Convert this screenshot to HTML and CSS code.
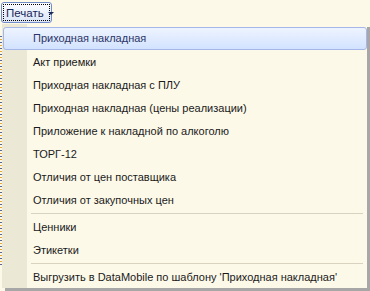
FILE: index.html
```html
<!DOCTYPE html>
<html lang="ru">
<head>
    <meta charset="UTF-8">
    <title>Печать</title>
    <link rel="stylesheet" href="styles.css">
</head>
<body>

    <div class="toolbar">
        <div class="print-btn"><div class="focus">Печать<span class="arrow"></span></div></div>
    </div>

    <div class="page-edge"></div>

    <!-- Popup menu of the print button -->
    <div class="menu">
        <div class="item active">Приходная накладная</div>
        <div class="item">Акт приемки</div>
        <div class="item">Приходная накладная с ПЛУ</div>
        <div class="item">Приходная накладная (цены реализации)</div>
        <div class="item">Приложение к накладной по алкоголю</div>
        <div class="item">ТОРГ-12</div>
        <div class="item">Отличия от цен поставщика</div>
        <div class="item">Отличия от закупочных цен</div>
        <div class="sep"></div>
        <div class="item">Ценники</div>
        <div class="item">Этикетки</div>
        <div class="sep"></div>
        <div class="item">Выгрузить в DataMobile по шаблону 'Приходная накладная'</div>
    </div>

</body>
</html>
```

FILE: styles.css
```css
body {
    margin: 0;
    background-color: #fdf9e9;
    font-family: "Liberation Sans", Arial, sans-serif;
    font-size: 11px;
    color: #1a1a1a;
    width: 370px;
    height: 291px;
    overflow: hidden;
    position: relative;
}

.toolbar {
    display: flex;
    padding: 2px 0 0 1px;
}

.print-btn {
    display: block;
    width: 51px;
    height: 21px;
    padding: 1px;
    box-sizing: border-box;
    border: 1px solid #6f8cc8;
    border-radius: 3px;
    background: linear-gradient(#fbfcff, #dbe5f7);
    color: #17255a;
    font-size: 11.5px;
}

.print-btn .focus {
    display: flex;
    align-items: center;
    height: 17px;
    box-sizing: border-box;
    padding-left: 2px;
    border: 1px dotted #000;
}

.arrow {
    display: inline-block;
    margin-left: 4px;
    margin-top: 1px;
    border-left: 3px solid transparent;
    border-right: 3px solid transparent;
    border-top: 3px solid #1b2a5c;
}

.page-edge {
    position: absolute;
    left: 0;
    top: 36px;
    width: 2px;
    height: 230px;
    background: repeating-linear-gradient(#5b6690 0 1px, #fdf9e9 1px 3px, #e8a93a 3px 4px, #fdf9e9 4px 6px);
}

.menu {
    position: absolute;
    left: 2px;
    top: 24px;
    width: 365px;
    height: 264px;
    padding-top: 3px;
    box-sizing: border-box;
    background: linear-gradient(90deg, #ece8d6 0 25px, #fdf9e9 25px);
    box-shadow: 3px 3px 0 #a7a7a7;
}

.item {
    height: 23px;
    line-height: 23px;
    padding-left: 31px;
    white-space: nowrap;
}

.item.active {
    height: 21px;
    line-height: 21px;
    margin: 0 0 1px 1px;
    padding-left: 29px;
    border: 1px solid #a4b7e6;
    border-radius: 3px;
    background: linear-gradient(#eef4ff, #d2e2ff);
    color: #2b3566;
}

.sep {
    height: 1px;
    margin: 1px 4px 2px 29px;
    background-color: #d8d3c0;
}
```
